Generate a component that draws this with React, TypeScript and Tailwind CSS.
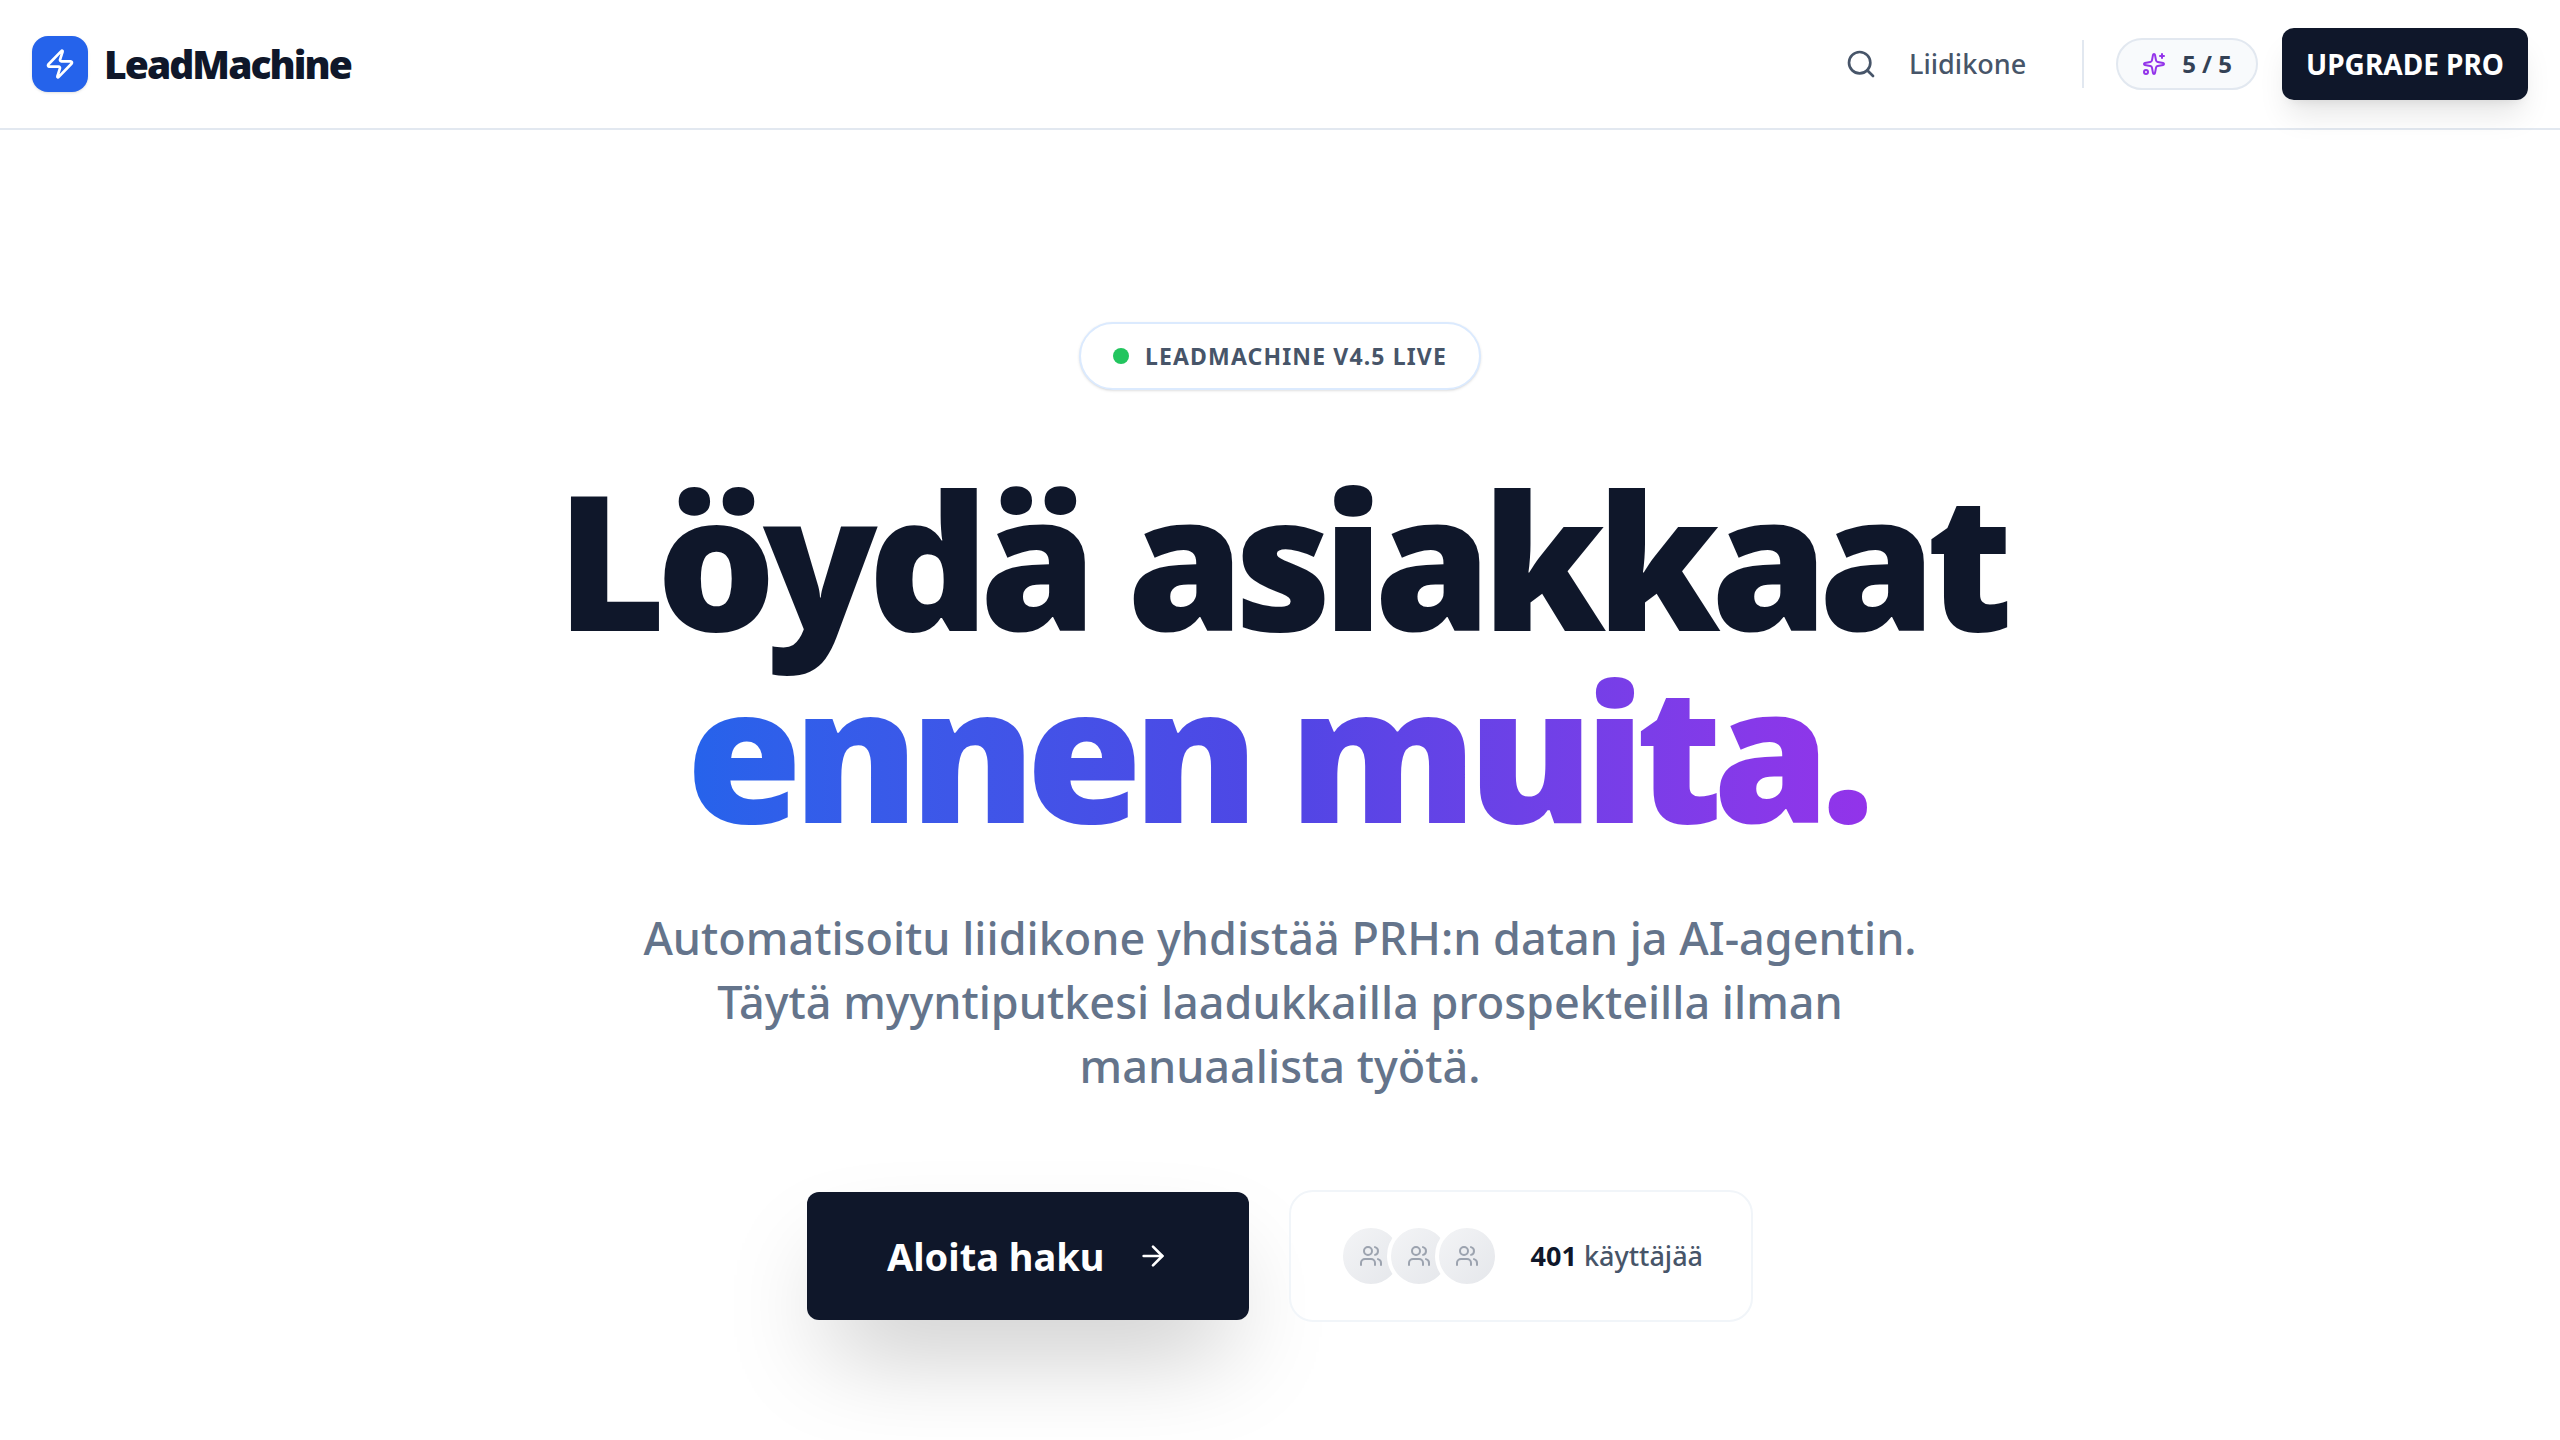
import React from 'react';
import { ArrowRight, Search, Sparkles, Users, Zap } from 'lucide-react';

const avatars = [1, 2, 3];

const Header: React.FC = () => (
  <header className="border-b-2 border-[#e2e8f0] bg-white">
    <div className="flex h-32 items-center justify-between px-8">
      <a href="#" className="flex items-center gap-4">
        <span className="flex size-14 items-center justify-center rounded-2xl bg-[#2563eb] shadow-sm">
          <Zap className="size-8 text-white" />
        </span>
        <span className="text-[39px] leading-14 font-black tracking-tighter text-[#0f172a]">LeadMachine</span>
      </a>

      <div className="flex items-center gap-8">
        <nav>
          <a href="#liidikone" className="flex items-center gap-8 px-6 text-[27px] leading-10 font-medium text-[#475569]">
            <Search className="size-8" />
            Liidikone
          </a>
        </nav>
        <div className="h-12 w-0.5 bg-[#e2e8f0]" />
        <div className="flex items-center gap-6">
          <div className="flex h-13 items-center gap-4 rounded-full border-2 border-[#e2e8f0] bg-[#f8fafc] px-6">
            <Sparkles className="size-6 text-[#9333ea]" />
            <span className="text-2xl font-bold text-[#334155]">5 / 5</span>
          </div>
          <button
            type="button"
            className="h-18 rounded-xl bg-[#0f172a] px-6 text-[28px] font-bold text-white shadow-[0_20px_30px_-6px_rgba(0,0,0,0.1),0_8px_12px_-8px_rgba(0,0,0,0.1)]"
          >
            UPGRADE PRO
          </button>
        </div>
      </div>
    </div>
  </header>
);

const App: React.FC = () => {
  return (
    <div className="min-h-screen overflow-hidden bg-white font-['Noto_Sans','Open_Sans',sans-serif]">
      <Header />

      <main className="flex flex-col items-center px-8 pt-48 pb-30 text-center">
        <div className="flex h-17 items-center gap-4 rounded-full border-2 border-[#dbeafe] bg-white px-8 shadow-sm">
          <span className="size-4 rounded-full bg-[#22c55e]" />
          <span className="text-[23px] font-bold tracking-wider text-[#475569]">LEADMACHINE V4.5 LIVE</span>
        </div>

        <h1 className="mt-18 text-[188px] leading-48 font-black tracking-tighter text-[#0f172a]">
          Löydä asiakkaat
          <br />
          <span className="bg-linear-to-r from-[#2563eb] via-[#4f46e5] to-[#9333ea] bg-clip-text pr-2 text-transparent">
            ennen muita.
          </span>
        </h1>

        <p className="mt-15 max-w-[1344px] text-[45px] leading-16 font-medium text-[#64748b]">
          Automatisoitu liidikone yhdistää PRH:n datan ja AI-agentin. Täytä myyntiputkesi laadukkailla prospekteilla ilman
          manuaalista työtä.
        </p>

        <div className="mt-23 flex items-center gap-10">
          <button
            type="button"
            className="flex h-32 items-center gap-8 rounded-xl bg-[#0f172a] px-20 text-[38px] font-bold text-white shadow-[0_50px_100px_-24px_rgba(0,0,0,0.25)]"
          >
            Aloita haku
            <ArrowRight className="size-8" />
          </button>

          <div className="flex h-33 items-center gap-8 rounded-3xl border-2 border-[#f1f5f9] bg-white/50 px-12">
            <div className="flex -space-x-4">
              {avatars.map((id) => (
                <span
                  key={id}
                  className="flex size-16 items-center justify-center rounded-full border-4 border-white bg-linear-to-br from-[#f3f4f6] to-[#e5e7eb]"
                >
                  <Users className="size-6 text-[#9ca3af]" />
                </span>
              ))}
            </div>
            <p className="text-[27px] font-medium text-[#475569]">
              <span className="font-bold text-[#0f172a]">401</span> käyttäjää
            </p>
          </div>
        </div>
      </main>
    </div>
  );
};

export default App;
